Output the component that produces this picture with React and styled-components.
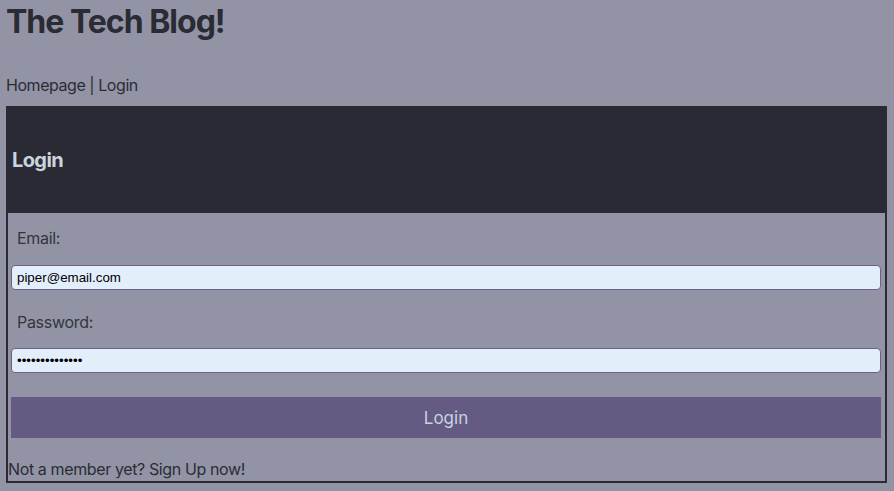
import React from "react";
import styled, { createGlobalStyle } from "styled-components";

const Global = createGlobalStyle`
  html, body {
    margin: 0;
    padding: 0;
    background: #9294a5;
  }
  body {
    padding: 0 7px 0 6px;
    font-family: Inter, "Noto Sans", sans-serif;
    color: #2b2c36;
  }
  * { box-sizing: border-box; }
`;

const Title = styled.h1`
  margin: 2px 0 0;
  font-size: 32px;
  font-weight: 700;
  line-height: 39px;
  letter-spacing: -1px;
  color: #2a2b34;
`;

const Nav = styled.nav`
  margin-top: 35px;
  font-size: 16px;
  line-height: 19px;
  letter-spacing: -0.45px;
  color: #2b2c36;
`;

const Card = styled.section`
  margin-top: 11px;
  border: 2px solid #292a33;
  display: flex;
  flex-direction: column;
`;

const CardHeader = styled.header`
  margin: -2px -1px 0 -2px;
  height: 107px;
  background: #292a33;
  display: flex;
  align-items: center;
  padding-left: 6px;
  font-size: 20px;
  font-weight: 700;
  letter-spacing: -0.6px;
  color: #c9d4de;
`;

const Form = styled.form`
  display: flex;
  flex-direction: column;
  padding: 0 4px 0 3px;
`;

const Label = styled.label`
  display: block;
  padding-left: 6px;
  font-size: 16px;
  line-height: 19px;
  letter-spacing: -0.3px;
  color: #33343f;
  margin-top: ${(p) => p.$top}px;
`;

const Input = styled.input`
  display: block;
  width: 100%;
  height: 25px;
  margin-top: ${(p) => p.$top}px;
  padding: 0 5px;
  border: 1px solid #6b6189;
  border-radius: 4px;
  background: #e3eefb;
  font-family: "Liberation Sans", Arial, sans-serif;
  font-size: 13.33px;
  color: #000;
  outline: none;
`;

const Button = styled.button`
  display: block;
  width: 100%;
  height: 41px;
  margin-top: 24px;
  border: none;
  background: #655a82;
  color: #c7d2e0;
  font-family: Inter, "Noto Sans", sans-serif;
  font-size: 17px;
  cursor: pointer;
`;

const Footer = styled.p`
  margin: 22px 0 2px;
  font-size: 16px;
  line-height: 19px;
  letter-spacing: -0.38px;
  color: #2b2c36;
`;

export default function App() {
  return (
    <>
      <Global />
      <Title>The Tech Blog!</Title>
      <Nav>Homepage | Login</Nav>
      <Card>
        <CardHeader>Login</CardHeader>
        <Form onSubmit={(e) => e.preventDefault()}>
          <Label $top={16}>Email:</Label>
          <Input $top={17} type="email" defaultValue="piper@email.com" />
          <Label $top={23}>Password:</Label>
          <Input $top={16} type="password" defaultValue="piperpassword1" />
          <Button type="submit">Login</Button>
        </Form>
        <Footer>Not a member yet? Sign Up now!</Footer>
      </Card>
    </>
  );
}
